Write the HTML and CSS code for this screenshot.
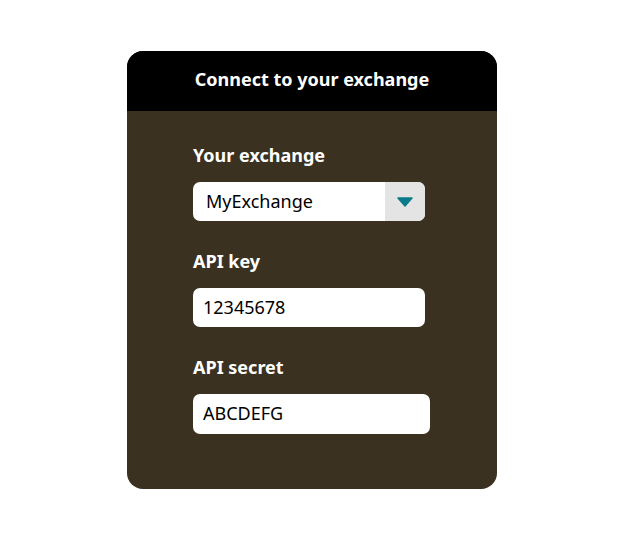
FILE: index.html
```html
<!DOCTYPE html>
<html>
<head>
<meta charset="utf-8">
<link rel="stylesheet" href="styles.css">
</head>
<body>
<div class="card">
  <div class="card-header">Connect to your exchange</div>
  <div class="card-body">
    <div class="field">
      <div class="label">Your exchange</div>
      <div class="select">
        <span class="select-value">MyExchange</span>
        <span class="select-btn"><svg width="16" height="10" viewBox="0 0 16 10"><path d="M1 1 L15 1 L8 9 Z" fill="#0b7b8b" stroke="#0b7b8b" stroke-width="1.5" stroke-linejoin="round"/></svg></span>
      </div>
    </div>
    <div class="field">
      <div class="label">API key</div>
      <div class="input">12345678</div>
    </div>
    <div class="field">
      <div class="label">API secret</div>
      <div class="input wide">ABCDEFG</div>
    </div>
  </div>
</div>
</body>
</html>
```
FILE: styles.css
```css
html, body { margin: 0; padding: 0; background: #fff; }
body { font-family: "Noto Sans", sans-serif; }
.card {
  width: 370px;
  margin: 51px 0 0 127px;
  background: #3a3121;
  border-radius: 16px;
  overflow: hidden;
}
.card-header {
  background: #000;
  color: #fff;
  height: 60px;
  box-sizing: border-box;
  padding-bottom: 4px;
  display: flex;
  align-items: center;
  justify-content: center;
  font-weight: 700;
  font-size: 18px;
}
.card-body {
  padding: 32px 0 55px 66px;
  display: flex;
  flex-direction: column;
  gap: 28px;
}
.field { display: flex; flex-direction: column; gap: 15px; }
.label { color: #fff; font-weight: 700; font-size: 18px; line-height: 24px; }
.select, .input {
  width: 232px;
  height: 39px;
  background: #fff;
  border-radius: 7px;
  box-sizing: border-box;
  font-size: 18px;
  color: #000;
  display: flex;
  align-items: center;
  padding-bottom: 2px;
}
.input { padding-left: 10px; }
.input.wide { width: 237px; height: 40px; }
.select { overflow: hidden; padding-bottom: 0; }
.select-value { flex: 1; padding-left: 13px; padding-bottom: 2px; }
.select-btn {
  width: 40px;
  height: 100%;
  background: #e4e4e4;
  display: flex;
  align-items: center;
  justify-content: center;
}
```
